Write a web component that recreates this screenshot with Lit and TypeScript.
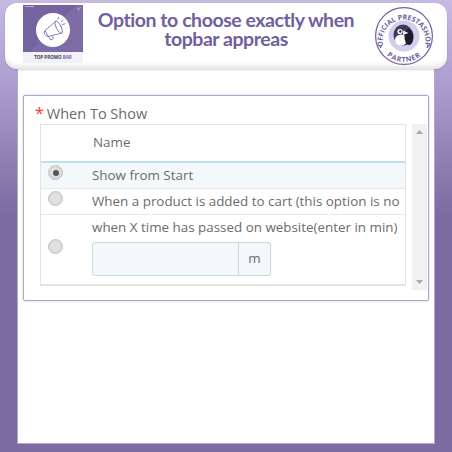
import { LitElement, html, css } from "lit";
import { customElement } from "lit/decorators.js";

@customElement("app-root")
export class AppRoot extends LitElement {
  static styles = css`
    :host {
      display: block;
      width: 452px;
      height: 452px;
      overflow: hidden;
      box-sizing: border-box;
      padding-top: 3px;
      background: linear-gradient(180deg, #c6bae3 0, #a99bcd 90px, #7b6ba0 215px, #7b6ba0 100%);
      font-family: "Open Sans", sans-serif;
      color: #6c6c6c;
    }
    .header {
      position: relative;
      z-index: 1;
      margin: 0 5px;
      height: 66px;
      box-sizing: border-box;
      background: #fff;
      border-radius: 12px;
      box-shadow: inset 0 -5px 6px -3px #dcdcdc, 0 1px 2px rgba(0, 0, 0, 0.15);
      display: flex;
      align-items: flex-start;
      padding: 2px 13px 0 18px;
    }
    .promo {
      width: 60px;
      height: 58px;
      flex: none;
      display: flex;
      flex-direction: column;
    }
    .promo-art {
      position: relative;
      height: 47px;
      box-sizing: border-box;
      padding-top: 2px;
      background: linear-gradient(135deg, #75639f 0%, #75639f 50%, #7d6ca6 50%, #7d6ca6 100%);
      display: flex;
      align-items: center;
      justify-content: center;
    }
    .promo-art svg {
      display: block;
    }
    .promo-tag {
      position: absolute;
      left: 2px;
      top: 1px;
      width: 9px;
      height: 1px;
      background: #b9aed4;
    }
    .promo-mark {
      position: absolute;
      right: 2px;
      top: 2px;
    }
    .promo-name {
      flex: 1;
      background: #f2f1f9;
      font: 700 4.5px/11px "Open Sans", sans-serif;
      text-align: center;
      color: #3a3a46;
      white-space: nowrap;
    }
    .promo-name span {
      color: #75639f;
    }
    .title {
      flex: 1;
      margin: 5px 0 0;
      font: 700 19.5px/19px Lato, sans-serif;
      letter-spacing: -0.45px;
      color: #6f60a0;
      text-align: center;
      padding-right: 5px;
    }
    .stamp {
      flex: none;
      width: 60px;
      height: 60px;
      margin-top: 1px;
      display: block;
    }
    .panel {
      margin: 0 17px;
      height: 375px;
      box-sizing: border-box;
      background: #fff;
      border: solid #b3a7d2;
      border-width: 0 1px 1px;
      padding: 26px 5px 0 5px;
    }
    .box {
      height: 206px;
      box-sizing: border-box;
      border: 1px solid #b2a6d2;
      border-radius: 2px;
      box-shadow: 0 0 2px rgba(120, 105, 170, 0.5);
      padding: 0 2px 0 16px;
    }
    .label {
      height: 28px;
      font-size: 14.5px;
      line-height: 36px;
      margin-left: -5px;
      color: #6c6c6c;
      white-space: nowrap;
    }
    .label b {
      color: #f33;
      font-weight: 400;
      font-size: 16px;
      line-height: 16px;
      margin-right: 3px;
    }
    .body {
      display: flex;
      align-items: flex-start;
      gap: 6px;
    }
    .table {
      width: 366px;
      flex: none;
      box-sizing: border-box;
      border: 1px solid #e3e3e3;
      border-bottom-width: 2px;
      font-size: 13.4px;
    }
    .row {
      display: flex;
      box-sizing: border-box;
      border-bottom: 1px solid #e8e8e8;
      overflow: hidden;
    }
    .row:last-child {
      border-bottom: 0;
    }
    .head {
      height: 38px;
      border-bottom: 2px solid #bfe0f0;
      line-height: 35px;
      padding-left: 52px;
    }
    .cell-radio {
      width: 51px;
      flex: none;
      box-sizing: border-box;
      padding-left: 7px;
      display: flex;
    }
    .radio {
      width: 15px;
      height: 15px;
      box-sizing: border-box;
      border-radius: 50%;
      background: #e1e1e1;
      border: 1px solid #c4c4c4;
      box-shadow: inset 0 0 2px #bbb;
      display: flex;
      align-items: center;
      justify-content: center;
    }
    .radio.on::after {
      content: "";
      width: 6px;
      height: 6px;
      border-radius: 50%;
      background: #555;
    }
    .opt {
      height: 26px;
      line-height: 25px;
      white-space: nowrap;
    }
    .opt .cell-radio {
      padding-top: 2px;
    }
    .opt.sel {
      background: #f3f8fb;
    }
    .opt .text {
      width: 308px;
      overflow: hidden;
      flex: none;
    }
    .tall {
      height: 69px;
      line-height: 25px;
      white-space: nowrap;
    }
    .tall .cell-radio {
      align-items: center;
      padding-bottom: 7px;
    }
    .group {
      display: flex;
      margin-top: 2px;
      width: 179px;
      height: 34px;
    }
    .input {
      width: 147px;
      flex: none;
      box-sizing: border-box;
      background: #f3f8fa;
      border: 1px solid #c6d9de;
      border-radius: 3px 0 0 3px;
    }
    .addon {
      flex: 1;
      box-sizing: border-box;
      background: #f3f8fa;
      border: 1px solid #c6d9de;
      border-left: 0;
      border-radius: 0 3px 3px 0;
      text-align: center;
      line-height: 30px;
      color: #6c6c6c;
    }
    .scroll {
      width: 15px;
      height: 166px;
      flex: none;
      background: #f1f1f1;
      display: flex;
      flex-direction: column;
      justify-content: space-between;
      align-items: center;
      padding: 6px 0;
      box-sizing: border-box;
    }
    .scroll svg {
      display: block;
    }
  `;

  private promoIcon() {
    return html`<svg width="36" height="36" viewBox="0 0 36 36">
      <circle cx="18" cy="18" r="17" fill="#fff"></circle>
      <g fill="none" stroke="#75639f" stroke-width="0.8" stroke-linejoin="round" stroke-linecap="round">
        <ellipse cx="23.7" cy="15.2" rx="2.4" ry="6.8" transform="rotate(-27 23.7 15.2)"></ellipse>
        <path d="M20.8 9.2 L10 18.6 L13.2 24.4 L26.6 21.2"></path>
        <path d="M10 18.6 Q8.4 20 9.4 22.2 Q10.6 24.6 13.2 24.4"></path>
        <path d="M13.6 24.4 L15.6 28 L18.4 26.6 L17 23.6"></path>
        <path d="M27.2 12.8 L30 11.8 M26 9.8 L27.8 8 M23 7.2 L23.4 5.4"></path>
      </g>
    </svg>`;
  }

  private stamp() {
    return html`<svg class="stamp" viewBox="0 0 60 60">
      <defs>
        <path id="top" d="M10 43 A21.5 21.5 0 1 1 50 43"></path>
        <path id="bot" d="M10.1 46.7 A26 26 0 0 0 49.9 46.7"></path>
      </defs>
      <circle cx="30" cy="30" r="28.4" fill="#fff" stroke="#6f60a0" stroke-width="1.2"></circle>
      <circle cx="30" cy="30" r="15.5" fill="#d5cdee"></circle>
      <text font-family="Open Sans, sans-serif" font-weight="700" font-size="7" fill="#6f60a0">
        <textPath href="#top" startOffset="50%" text-anchor="middle">OFFICIAL PRESTASHOP</textPath>
      </text>
      <text font-family="Open Sans, sans-serif" font-weight="700" font-size="7" fill="#6f60a0" letter-spacing="0.7">
        <textPath href="#bot" startOffset="50%" text-anchor="middle">PARTNER</textPath>
      </text>
      <circle cx="6.5" cy="41" r="1" fill="#6f60a0"></circle>
      <circle cx="53.5" cy="41" r="1" fill="#6f60a0"></circle>
      <ellipse cx="29" cy="29" rx="9.5" ry="10.5" fill="#3f3a5c"></ellipse>
      <ellipse cx="27" cy="34" rx="6" ry="5.5" fill="#fff"></ellipse>
      <ellipse cx="35" cy="31" rx="4.5" ry="8" fill="#1e1b30"></ellipse>
      <circle cx="26" cy="25.5" r="2.6" fill="#fff"></circle>
      <circle cx="26.3" cy="25.5" r="1.2" fill="#222"></circle>
      <path d="M29 24.5 L34.5 27 L29 29 Z" fill="#e9e4f6"></path>
    </svg>`;
  }

  render() {
    return html`
      <div class="header">
        <div class="promo">
          <div class="promo-art">
            <span class="promo-tag"></span>
            <svg class="promo-mark" width="4" height="4" viewBox="0 0 4 4">
              <path d="M3.6 0.5 L0.6 1.8 L2.4 3.6" fill="none" stroke="#d8d2ea" stroke-width="0.7"></path>
            </svg>
            ${this.promoIcon()}
          </div>
          <div class="promo-name">TOP PROMO <span>BAR</span></div>
        </div>
        <h1 class="title">Option to choose exactly when topbar appreas</h1>
        ${this.stamp()}
      </div>
      <div class="panel">
        <div class="box">
          <div class="label"><b>*</b>When To Show</div>
          <div class="body">
            <div class="table">
              <div class="row head">Name</div>
              <div class="row opt sel">
                <div class="cell-radio"><span class="radio on"></span></div>
                <div class="text">Show from Start</div>
              </div>
              <div class="row opt">
                <div class="cell-radio"><span class="radio"></span></div>
                <div class="text">When a product is added to cart (this option is not</div>
              </div>
              <div class="row tall">
                <div class="cell-radio"><span class="radio"></span></div>
                <div>
                  <div>when X time has passed on website(enter in min)</div>
                  <div class="group"><div class="input"></div><div class="addon">m</div></div>
                </div>
              </div>
            </div>
            <div class="scroll">
              <svg width="7" height="4" viewBox="0 0 7 4"><path d="M3.5 0 L7 4 H0 Z" fill="#a8a8a8"></path></svg>
              <svg width="7" height="4" viewBox="0 0 7 4"><path d="M0 0 H7 L3.5 4 Z" fill="#a8a8a8"></path></svg>
            </div>
          </div>
        </div>
      </div>
    `;
  }
}
